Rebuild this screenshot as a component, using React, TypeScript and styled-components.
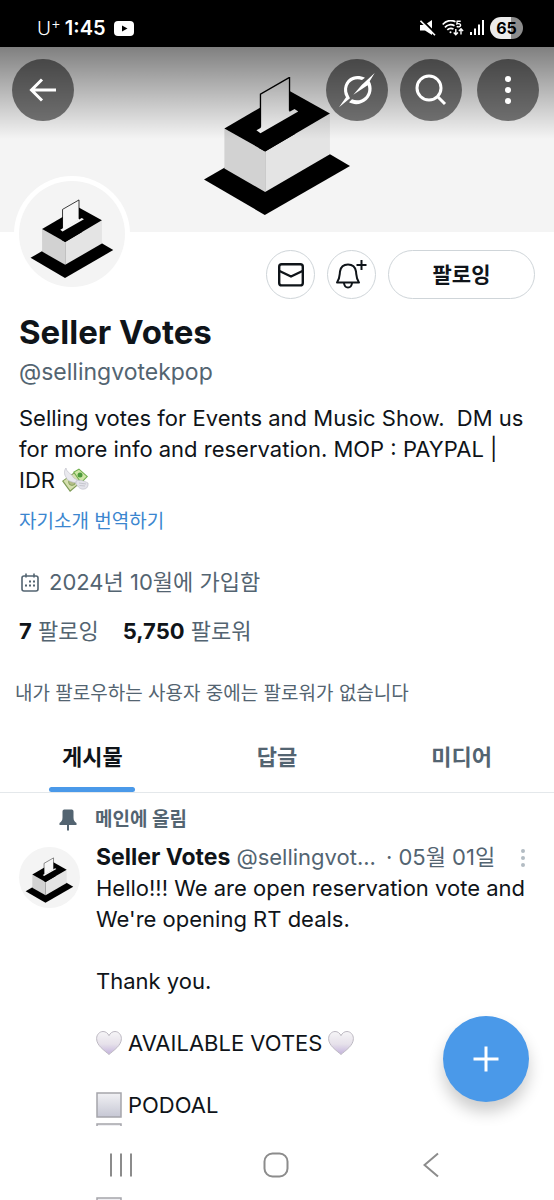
import React from "react";
import styled, { createGlobalStyle } from "styled-components";

const ink = "#0f1419";
const muted = "#536471";
const blue = "#4a99e9";

const GlobalStyle = createGlobalStyle`
  *, *::before, *::after { box-sizing: border-box; }
  body { margin: 0; background: #fff; }
  button { font: inherit; color: inherit; padding: 0; border: 0; background: none; cursor: pointer; }
  h1, p { margin: 0; font-weight: 400; }
  svg { display: block; flex: none; }
`;

const Screen = styled.div`
  display: flex;
  flex-direction: column;
  height: 100vh;
  overflow: hidden;
  background: #fff;
  color: ${ink};
  font-family: Inter, "Noto Sans CJK KR", sans-serif;
  font-size: 22px;
  line-height: 31px;
`;

/* Status bar */

const StatusBar = styled.header`
  flex: none;
  display: flex;
  align-items: center;
  justify-content: space-between;
  height: 47px;
  padding: 9px 31px 0 37px;
  background: #000;
  color: #fff;
`;

const StatusGroup = styled.div<{ $gap: number }>`
  display: flex;
  align-items: center;
  gap: ${(p) => p.$gap}px;
`;

const Carrier = styled.span`
  font-size: 19px;
  font-weight: 300;
  sup {
    font-size: 15px;
    line-height: 0;
    vertical-align: 6px;
  }
`;

const Clock = styled.span`
  font-size: 20px;
  font-weight: 600;
`;

const Battery = styled.span`
  width: 33px;
  height: 22px;
  border-radius: 11px;
  background: linear-gradient(90deg, #ececec 65%, #8c8c8c 65%);
  color: #000;
  font-size: 16px;
  font-weight: 700;
  line-height: 22px;
  text-align: center;
`;

/* Profile header */

const Content = styled.main`
  position: relative;
  flex: 1;
  min-height: 0;
  overflow: hidden;
`;

const Banner = styled.div`
  position: relative;
  display: flex;
  justify-content: center;
  height: 185px;
  padding-top: 30px;
  background: #f4f4f4;
`;

const TopBar = styled.nav`
  position: absolute;
  inset: 0 0 auto 0;
  display: flex;
  justify-content: space-between;
  height: 92px;
  padding: 12px 15px 0 12px;
  background: linear-gradient(rgba(0, 0, 0, 0.48), rgba(0, 0, 0, 0));
`;

const ToolGroup = styled.div<{ $gap: number }>`
  display: flex;
  gap: ${(p) => p.$gap}px;
`;

const RoundTool = styled.button`
  display: grid;
  place-items: center;
  width: 62px;
  height: 62px;
  border-radius: 50%;
  background: rgba(0, 0, 0, 0.5);
`;

const Avatar = styled.div<{ $size: number }>`
  flex: none;
  width: ${(p) => p.$size}px;
  height: ${(p) => p.$size}px;
  border-radius: 50%;
  background: #f4f4f4;
  overflow: hidden;
`;

const ProfileAvatar = styled.div`
  position: absolute;
  left: 14px;
  top: 129px;
  padding: 5px;
  border-radius: 50%;
  background: #fff;
`;

const Profile = styled.section`
  padding: 18px 19px 0;
`;

const Actions = styled.div`
  display: flex;
  justify-content: flex-end;
  gap: 12px;
`;

const OutlineButton = styled.button<{ $wide?: boolean }>`
  display: grid;
  place-items: center;
  width: ${(p) => (p.$wide ? 147 : 49)}px;
  height: 49px;
  border: 1px solid #cfd5d9;
  border-radius: 25px;
  font-size: 21px;
  font-weight: 700;
`;

const Name = styled.h1`
  margin-top: 13px;
  font-size: 33px;
  font-weight: 700;
  line-height: 40px;
`;

const Handle = styled.p`
  margin-top: 5px;
  color: ${muted};
  font-size: 23px;
`;

const Bio = styled.p`
  margin-top: 15px;
  white-space: pre-wrap;
`;

const InlineIcon = styled.span`
  display: inline-block;
  vertical-align: -5px;
`;

const Translate = styled.a`
  display: block;
  width: fit-content;
  margin-top: 12px;
  color: #3b86cf;
  font-size: 19px;
  line-height: 28px;
  text-decoration: none;
`;

const Joined = styled.p`
  display: flex;
  align-items: center;
  gap: 8px;
  margin-top: 31px;
  color: ${muted};
`;

const Counts = styled.p`
  display: flex;
  gap: 24px;
  margin-top: 18px;
  color: ${muted};
`;

const Count = styled.a`
  color: inherit;
  text-decoration: none;
  strong { color: ${ink}; }
`;

const Mutuals = styled.p`
  margin-top: 33px;
  padding: 0 15px;
  color: ${muted};
  font-size: 19px;
  line-height: 28px;
`;

/* Tabs */

const Tabs = styled.div`
  display: grid;
  grid-template-columns: repeat(3, 1fr);
  margin-top: 13px;
  border-bottom: 1px solid #e4e8eb;
`;

const Tab = styled.button<{ $active?: boolean }>`
  display: grid;
  justify-items: center;
  align-content: end;
  gap: 14px;
  height: 71px;
  color: ${(p) => (p.$active ? ink : muted)};
  font-size: 22px;
  font-weight: 700;
  &::after {
    content: "";
    width: 86px;
    height: 5px;
    border-radius: 3px;
    background: ${(p) => (p.$active ? blue : "transparent")};
  }
`;

/* Pinned post */

const Pinned = styled.p`
  display: flex;
  align-items: center;
  gap: 18px;
  padding: 12px 19px 0 59px;
  color: ${muted};
  font-size: 19px;
  font-weight: 700;
  line-height: 30px;
`;

const Post = styled.article`
  display: flex;
  gap: 16px;
  padding: 7px 15px 0 19px;
`;

const PostAvatar = styled.div`
  padding-top: 5px;
`;

const PostMain = styled.div`
  flex: 1;
  min-width: 0;
`;

const PostHead = styled.div`
  display: flex;
  align-items: center;
  color: ${muted};
  white-space: nowrap;
  strong { color: ${ink}; font-size: 23px; }
`;

const PostHandle = styled.span`
  margin-left: 6px;
`;

const PostDate = styled.span`
  margin-left: 10px;
`;

const PostMore = styled.button`
  margin-left: auto;
  padding: 0 12px;
`;

const PostBody = styled.p`
  min-height: 31px;
`;

const BulletLine = styled.p`
  display: flex;
  align-items: center;
  gap: 6px;
  height: 31px;
  svg { margin-bottom: 2px; }
`;

const Compose = styled.button`
  position: absolute;
  right: 25px;
  bottom: 24px;
  display: grid;
  place-items: center;
  width: 86px;
  height: 86px;
  border-radius: 50%;
  background: ${blue};
  box-shadow: 0 10px 16px rgba(0, 0, 0, 0.2);
`;

/* System navigation */

const SystemNav = styled.nav`
  position: relative;
  flex: none;
  display: grid;
  grid-template-columns: repeat(3, 1fr);
  height: 74px;
  padding: 0 45px 0 43px;
  overflow: hidden;
`;

const SystemButton = styled.button`
  display: grid;
  place-items: center;
  height: 78px;
`;

const NavPeek = styled.span`
  position: absolute;
  left: 96px;
  top: 71px;
`;

function BallotShapes() {
  return (
    <>
      <polygon points="43,358 225,464 480,317 298,210" fill="#000" />
      <polygon points="104,205 226,274 226,395 104,325" fill="#d2d2d2" />
      <polygon points="226,274 420,160 420,282 226,395" fill="#e4e4e4" />
      <polygon points="104,205 226,274 420,160 298,92" fill="#000" />
      <polygon points="200,210 212,219 325,154 314,147" fill="#f6f6f6" />
      <polygon points="213,102 299,53 299,158 213,207" fill="#f6f6f6" />
      <path d="M212 200V102L299 52V152" fill="none" stroke="#000" strokeWidth="4" />
    </>
  );
}

function AvatarArt({ size }: { size: number }) {
  return (
    <svg width={size} height={size} viewBox="-18 -48 560 560" aria-hidden="true">
      <BallotShapes />
    </svg>
  );
}

function Heart() {
  return (
    <svg width="26" height="26" viewBox="0 0 26 26" aria-label="white heart">
      <defs>
        <linearGradient id="heart" x1="0" y1="0" x2="0" y2="1">
          <stop offset="0" stopColor="#f6f5f7" />
          <stop offset="0.55" stopColor="#e6e1ea" />
          <stop offset="1" stopColor="#c3b2dc" />
        </linearGradient>
      </defs>
      <path
        d="M13 24.500C8.500 20.500.6 15.600.6 8.600.6 4.600 3.600 1.500 7 1.500c2.700 0 4.900 1.600 6 4.200 1.100-2.600 3.300-4.200 6-4.200 3.400 0 6.400 3.100 6.400 7.100C25.400 15.600 17.500 20.500 13 24.500Z"
        fill="url(#heart)"
        stroke="#bdb9c2"
      />
    </svg>
  );
}

function Square() {
  return (
    <svg width="26" height="26" viewBox="0 0 26 26" aria-label="white square">
      <defs>
        <linearGradient id="square" x1="0" y1="0" x2="0" y2="1">
          <stop offset="0" stopColor="#f1f1f4" />
          <stop offset="1" stopColor="#c6c7d4" />
        </linearGradient>
      </defs>
      <rect x="1" y="1" width="24" height="24" fill="url(#square)" stroke="#a5a5ab" strokeWidth="1.500" />
    </svg>
  );
}

function FlyingMoney() {
  return (
    <svg width="28" height="26" viewBox="0 0 28 26" aria-label="money with wings">
      <path d="M1 14 15 4l8 9L9 25Z" fill="#7d9a55" />
      <path d="M2.500 14 15 5.300l6.500 7.600L9.200 23.300Z" fill="#d5dfae" />
      <circle cx="11" cy="15" r="3.400" fill="#b3bd86" stroke="#7d9a55" strokeWidth=".8" />
      <path d="M12 5 18 1.500l9 8-7 7Z" fill="#6fae4c" />
      <path d="M13.500 5.300 18 2.800l7.500 6.800-5.300 5.300Z" fill="#cfe6a6" />
      <circle cx="19" cy="8" r="2.500" fill="#4c9a3c" />
      <path d="M5 1c1 5 5 5 7 9 1 2 4 2 6 4l-3 2C11 15 6 14 5 10 3 8 3 3 5 1Z" fill="#e9e9ee" stroke="#b9b9c2" strokeWidth=".6" />
      <path d="M15 14c4-2 8 0 12 2 .5 3-1 6-4 6 -3 1-6-2-8-5Z" fill="#e3e3ea" stroke="#b9b9c2" strokeWidth=".6" />
      <path d="M18 16l7 1M18.500 18.500l5.500.5" stroke="#b9b9c2" strokeWidth=".7" />
    </svg>
  );
}

function Dots({ height, radius, color }: { height: number; radius: number; color: string }) {
  return (
    <svg width="8" height={height} viewBox={`0 0 8 ${height}`} fill={color} aria-hidden="true">
      <circle cx="4" cy={radius} r={radius} />
      <circle cx="4" cy={height / 2} r={radius} />
      <circle cx="4" cy={height - radius} r={radius} />
    </svg>
  );
}

export default function App() {
  return (
    <>
      <GlobalStyle />
      <Screen>
        <StatusBar>
          <StatusGroup $gap={8}>
            <StatusGroup $gap={4}>
              <Carrier>U<sup>+</sup></Carrier>
              <Clock>1:45</Clock>
            </StatusGroup>
            <svg width="20" height="15" viewBox="0 0 20 15" aria-label="YouTube">
              <rect width="20" height="15" rx="4" fill="#fff" />
              <path d="M8 4.500v6l5.500-3z" fill="#000" />
            </svg>
          </StatusGroup>
          <StatusGroup $gap={6}>
            <svg width="16" height="16" viewBox="0 0 16 16" aria-label="muted">
              <path d="M0 5h4.500L12 0v15l-7-4.500H0Z" fill="#fff" />
              <path d="M1.500-.5 16 14" stroke="#000" strokeWidth="2" />
              <path d="M.5.800 15 15.200" stroke="#fff" strokeWidth="1.600" />
            </svg>
            <svg width="22" height="16" viewBox="0 0 22 16" fill="none" stroke="#fff" strokeWidth="1.700" aria-label="Wi-Fi 5">
              <path d="M.7 4.500C4.500.3 9.500 0 13.500 1.700M2.900 7.300C5.500 4.500 9.500 4 12.500 5.700M5.300 9.900c1.700-1.700 4-2 6.200-1" />
              <circle cx="8.500" cy="12.300" r="1" fill="#fff" stroke="none" />
              <path d="M18.700 1.200h-3.500l-.3 2.700c2.400-.8 3.900 0 3.700 1.500-.2 1.400-2.200 1.900-3.900.9" strokeWidth="1.400" />
              <path d="M13.800 9v5.500M11.700 12.500l2.100 2.200 2.100-2.200M19 14.500V9M16.900 11 19 8.800l2.100 2.200" strokeWidth="1.400" />
            </svg>
            <svg width="14" height="16" viewBox="0 0 14 16" fill="#fff" aria-label="signal">
              <rect y="12" width="2" height="3" />
              <rect x="4" y="8.500" width="2" height="6.500" />
              <rect x="8" y="4.500" width="2" height="10.500" />
              <rect x="12" y="0" width="2" height="15" />
            </svg>
            <Battery>65</Battery>
          </StatusGroup>
        </StatusBar>

        <Content>
          <Banner>
            <svg width="146" height="138" viewBox="43 51 437 413" aria-label="ballot box">
              <BallotShapes />
            </svg>
            <TopBar>
              <RoundTool aria-label="Back">
                <svg width="28" height="24" viewBox="0 0 28 24" fill="none" stroke="#fff" strokeWidth="3">
                  <path d="M27 12H2.500M13 1.500 2.500 12 13 22.500" />
                </svg>
              </RoundTool>
              <ToolGroup $gap={15}>
                <ToolGroup $gap={12}>
                  <RoundTool aria-label="Grok">
                    <svg width="36" height="36" viewBox="186 215 108 108" fill="#fff">
                      <path d="M207 291C194 268 203 237 228 229c12-4 25-2 36 3l-9 7c-14-5-29-2-38 9-8 11-9 23-3 35l5 11-33 27Z" />
                      <path d="M229 283 254 254 293 218 278 243c10 17 7 42-9 56-15 14-37 16-53 7l9-9c15 6 29 3 40-8 9-9 11-22 7-34Z" />
                    </svg>
                  </RoundTool>
                  <RoundTool aria-label="Search">
                    <svg width="32" height="32" viewBox="0 0 32 32" fill="none" stroke="#fff" strokeWidth="3">
                      <circle cx="14" cy="14" r="12" />
                      <path d="M22.500 22.500 30 30" />
                    </svg>
                  </RoundTool>
                </ToolGroup>
                <RoundTool aria-label="More options">
                  <Dots height={28} radius={3} color="#fff" />
                </RoundTool>
              </ToolGroup>
            </TopBar>
            <ProfileAvatar>
              <Avatar $size={106}>
                <AvatarArt size={106} />
              </Avatar>
            </ProfileAvatar>
          </Banner>

          <Profile>
            <Actions>
              <OutlineButton aria-label="Message">
                <svg width="26" height="24" viewBox="0 0 26 24" fill="none" stroke={ink} strokeWidth="2.400">
                  <rect x="1.200" y="1.200" width="23.600" height="21.200" rx="2.500" />
                  <path d="M1.500 8 13 13.500 24.500 8" />
                </svg>
              </OutlineButton>
              <OutlineButton aria-label="Notifications">
                <svg width="32" height="32" viewBox="1 0 32 32" fill="none" stroke={ink} strokeWidth="2">
                  <path d="M2 23.500c3-4 2.500-7 3-11C5.700 8 9 5.500 13 5.500s7.300 2.500 8 7c.5 4 0 7 3 11Z" strokeLinejoin="round" />
                  <path d="M9 24c.3 2.800 2 4.500 4 4.500s3.700-1.700 4-4.500M26.500 1v10M21.500 6h10" />
                </svg>
              </OutlineButton>
              <OutlineButton $wide>팔로잉</OutlineButton>
            </Actions>
            <Name>Seller Votes</Name>
            <Handle>@sellingvotekpop</Handle>
            <Bio>
              {"Selling votes for Events and Music Show.  DM us for more info and reservation. MOP : PAYPAL | IDR "}
              <InlineIcon><FlyingMoney /></InlineIcon>
            </Bio>
            <Translate href="#translate">자기소개 번역하기</Translate>
            <Joined>
              <svg width="22" height="20" viewBox="0 0 22 20" fill="none" stroke={muted} strokeWidth="1.600" aria-hidden="true">
                <rect x="3" y="3" width="16" height="15" rx="2" />
                <path d="M7 .5v4M15 .5v4" />
                <path d="M10 8.500h2M14 8.500h2M6 12.500h2M10 12.500h2M14 12.500h2" strokeWidth="2" />
              </svg>
              2024년 10월에 가입함
            </Joined>
            <Counts>
              <Count href="#following"><strong>7</strong> 팔로잉</Count>
              <Count href="#followers"><strong>5,750</strong> 팔로워</Count>
            </Counts>
          </Profile>
          <Mutuals>내가 팔로우하는 사용자 중에는 팔로워가 없습니다</Mutuals>

          <Tabs role="tablist">
            <Tab role="tab" aria-selected="true" $active>게시물</Tab>
            <Tab role="tab" aria-selected="false">답글</Tab>
            <Tab role="tab" aria-selected="false">미디어</Tab>
          </Tabs>

          <Pinned>
            <svg width="18" height="22" viewBox="0 0 18 22" fill={muted} aria-hidden="true">
              <path d="M3.500 2.500C3.500 1 4.500.5 6 .5h6c1.500 0 2.500.5 2.500 2v6c0 3 1 4 3 5.500V16H10v5l-1 1-1-1v-5H.5v-2c2-1.500 3-2.500 3-5.500Z" />
            </svg>
            메인에 올림
          </Pinned>
          <Post>
            <PostAvatar>
              <Avatar $size={61}>
                <AvatarArt size={61} />
              </Avatar>
            </PostAvatar>
            <PostMain>
              <PostHead>
                <strong>Seller Votes</strong>
                <PostHandle>@sellingvot...</PostHandle>
                <PostDate>· 05월 01일</PostDate>
                <PostMore aria-label="Post options">
                  <Dots height={18} radius={2} color="#b3bcc3" />
                </PostMore>
              </PostHead>
              <PostBody>Hello!!! We are open reservation vote and We're opening RT deals.</PostBody>
              <PostBody />
              <PostBody>Thank you.</PostBody>
              <PostBody />
              <BulletLine><Heart />AVAILABLE VOTES<Heart /></BulletLine>
              <PostBody />
              <BulletLine><Square />PODOAL</BulletLine>
              <BulletLine><Square /></BulletLine>
            </PostMain>
          </Post>
          <Compose aria-label="New post">
            <svg width="26" height="26" viewBox="0 0 26 26" stroke="#fff" strokeWidth="3">
              <path d="M13 .5v25M.5 13h25" />
            </svg>
          </Compose>
        </Content>

        <SystemNav>
          <SystemButton aria-label="Recents">
            <svg width="24" height="24" viewBox="0 0 24 24" stroke="#8c8c8c" strokeWidth="2">
              <path d="M2 .5v23M12 .5v23M22 .5v23" />
            </svg>
          </SystemButton>
          <SystemButton aria-label="Home">
            <svg width="26" height="26" viewBox="0 0 26 26" fill="none" stroke="#8c8c8c" strokeWidth="2">
              <rect x="1.500" y="1.500" width="23" height="23" rx="8" />
            </svg>
          </SystemButton>
          <SystemButton aria-label="Back">
            <svg width="16" height="26" viewBox="0 0 16 26" fill="none" stroke="#8c8c8c" strokeWidth="2">
              <path d="M15 1.500 1.500 13 15 24.500" />
            </svg>
          </SystemButton>
          <NavPeek><Square /></NavPeek>
        </SystemNav>
      </Screen>
    </>
  );
}
